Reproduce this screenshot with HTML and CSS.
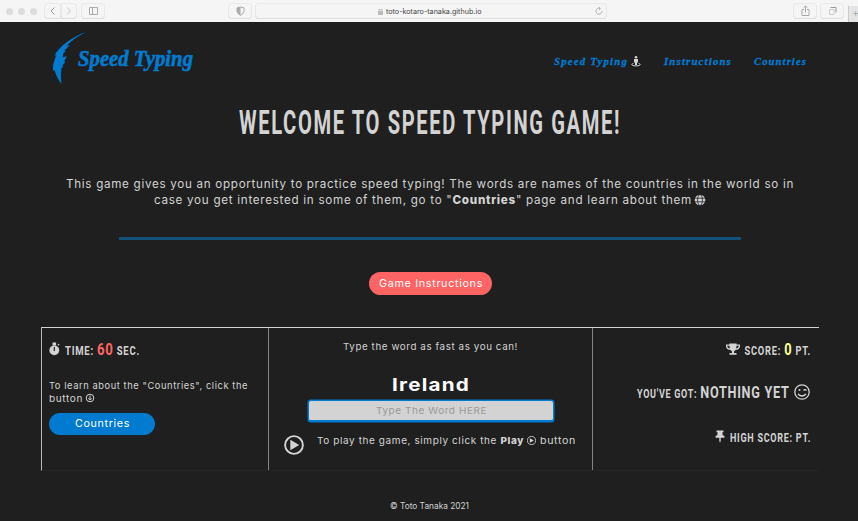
FILE: index.html
```
<!DOCTYPE html>
<html lang="en">
<head>
<meta charset="utf-8">
<title>Speed Typing</title>
<link rel="stylesheet" href="styles.css">
</head>
<body>
<svg class="defs" width="0" height="0" aria-hidden="true">
  <symbol id="play" viewBox="0 0 20 20"><circle cx="10" cy="10" r="8.9" fill="none" stroke="currentColor" stroke-width="1.9"/><path d="M6.3 4.8v10.4l8.9-5.2z" fill="currentColor"/></symbol>
</svg>
<div class="toolbar">
  <div class="dots"><i></i><i></i><i></i></div>
  <div class="tool back"><svg width="16" height="14"><path d="M9.5 3.5L6 7l3.500 3.500" stroke="#999"/></svg></div>
  <div class="tool forward"><svg width="15" height="14"><path d="M6 3.500L9.500 7 6 10.500" stroke="#c8c8c8"/></svg></div>
  <div class="tool sidebar"><svg width="23" height="14"><path d="M7.500 3.500h8v7h-8zM10.500 3.500v7" stroke="#aaa"/></svg></div>
  <div class="tool shield"><svg width="23" height="14"><path d="M11.500 3l3.500.8v3.500q-.4 2.500-3.500 4-3.100-1.500-3.500-4V3.800z" stroke="#aaa"/><path d="M11.500 3v8.300q-3.100-1.500-3.500-4V3.800z" fill="#aaa"/></svg></div>
  <div class="address">
    <svg class="lock" width="5" height="7"><path d="M0 3h5v4H0z" fill="#bbb"/><path d="M1 3V1.500h3V3" stroke="#bbb"/></svg>
    <span>toto-kotaro-tanaka.github.io</span>
    <svg class="reload" width="8" height="8"><path d="M5 1.300A3 3 0 1 0 7 4M3.500 0L5.300 1.400 4 3" stroke="#aaa" stroke-width=".9"/></svg>
  </div>
  <div class="tool share"><svg width="23" height="14"><path d="M10 5.500H8v6h7v-6h-2M11.500 8.500V2M9.700 3.700l1.800-1.800 1.800 1.800" stroke="#aaa"/></svg></div>
  <div class="tool tabs"><svg width="23" height="14"><path d="M8.500 5.500h4.500v5H8.500z" stroke="#ccc"/><path d="M9.500 3.500h5.500v5" stroke="#999"/></svg></div>
  <div class="plus">+</div>
</div>
<header>
  <svg class="logo" width="142" height="54" viewBox="0 0 142 54">
    <path d="M34 1C20 6 6 16 2.500 25l1.800-.9C2 30 0 36 1.500 40l1-1C4 44 6 49 9.500 53 8.500 47 9 42 9.500 37l1.800-1.200-.9-1.200 2.600-3-.7-1.800 2.700-4.500-4.200 1 .5-3.500 2.200-2.500-1-.7 5.500-5.500-3.500.6C19 10 26 5 34 1z" fill="#017bd0"/>
    <text class="logo-text" x="26" y="35" textLength="115" lengthAdjust="spacingAndGlyphs">Speed Typing</text>
  </svg>
  <nav>
    <a><svg width="87" height="18"><text class="nav-text" x="0" y="12" textLength="74" lengthAdjust="spacingAndGlyphs">Speed Typing</text><g fill="#d3d3d3"><circle cx="82" cy="4.300" r="1.300"/><path d="M80 6h4v3.200l-1 .5v2.300h-2V9.700l-1-.5z"/><path d="M79.500 10.300c-2.500.7-2.500 2.600 2.500 2.600s5-1.900 2.500-2.600" fill="none" stroke="#d3d3d3"/></g></svg></a>
    <a><svg width="67" height="18"><text class="nav-text" x="0" y="12" textLength="68" lengthAdjust="spacingAndGlyphs">Instructions</text></svg></a>
    <a><svg width="52" height="18"><text class="nav-text" x="0" y="12" textLength="53" lengthAdjust="spacingAndGlyphs">Countries</text></svg></a>
  </nav>
</header>
<main>
  <h1><svg width="384" height="36"><text class="display" x="2" y="29" font-size="33.500" textLength="382" lengthAdjust="spacingAndGlyphs">WELCOME TO SPEED TYPING GAME!</text></svg></h1>
  <div class="intro">
    <svg width="728" height="16"><text x="0" y="12" textLength="728" lengthAdjust="spacingAndGlyphs">This game gives you an opportunity to practice speed typing! The words are names of the countries in the world so in</text></svg>
    <svg width="552" height="16"><text x="0" y="12" textLength="538" lengthAdjust="spacingAndGlyphs">case you get interested in some of them, go to "<tspan class="strong">Countries</tspan>" page and learn about them</text><circle cx="546" cy="8" r="5.300"/><g fill="none" stroke="#1f1f1f" stroke-width=".8"><path d="M541 6.200h10M541 9.800h10"/><ellipse cx="546" cy="8" rx="2.400" ry="5.500"/></g></svg>
  </div>
  <hr>
  <button class="pill red"><svg width="103" height="16"><text x="0" y="11" textLength="104" lengthAdjust="spacingAndGlyphs">Game Instructions</text></svg></button>
  <section class="panel">
    <div class="cell left">
      <svg class="stat" width="90" height="20"><g fill="#d3d3d3"><circle cx="5.300" cy="10.300" r="4.900"/><path d="M3.500 2.500h3.600v3H3.500zM8.500 4.700l1-1 1 1-1 1z"/></g><path d="M5.300 7v4" stroke="#1f1f1f" stroke-width="1.200"/><text class="display" x="16" y="14.500" font-size="12.300" textLength="75" lengthAdjust="spacingAndGlyphs">TIME: <tspan class="coral">60</tspan> SEC.</text></svg>
      <div class="learn"><svg width="200" height="25"><text x="0" y="9" textLength="199" lengthAdjust="spacingAndGlyphs">To learn about the "Countries", click the</text><text x="0" y="22" textLength="34" lengthAdjust="spacingAndGlyphs">button</text><g fill="none" stroke="#d3d3d3"><circle cx="41" cy="18" r="3.800"/><path d="M41 15.500v4M39.200 18.300l1.800 1.800 1.800-1.800"/></g></svg></div>
      <button class="pill blue"><svg width="54" height="16"><text x="0" y="11" textLength="55" lengthAdjust="spacingAndGlyphs">Countries</text></svg></button>
    </div>
    <div class="cell center">
      <svg class="hint" width="175" height="16"><text x="0" y="11" textLength="175" lengthAdjust="spacingAndGlyphs">Type the word as fast as you can!</text></svg>
      <svg class="word" width="77" height="22"><text x="0" y="17.500" textLength="78" lengthAdjust="spacingAndGlyphs">Ireland</text></svg>
      <div class="entry"><svg width="110" height="16"><text x="0" y="11" textLength="111" lengthAdjust="spacingAndGlyphs">Type The Word HERE</text></svg></div>
      <div class="play-row"><svg class="play" width="20" height="20"><use href="#play"/></svg><svg width="259" height="16"><text x="0" y="11" textLength="207" lengthAdjust="spacingAndGlyphs">To play the game, simply click the <tspan class="strong">Play</tspan></text><use href="#play" x="210" y="3" width="9" height="9"/><text x="223" y="11" textLength="36" lengthAdjust="spacingAndGlyphs">button</text></svg></div>
    </div>
    <div class="cell right">
      <svg width="84" height="20"><path d="M3.500 3.500h7v1H14v2c0 2-2 3.300-4.500 3.500L8 11.500v1.500h2.500v1.700h-7V13H6v-1.500L4.500 10C2 9.800 0 8.500 0 6.500v-2h3.500zM1.200 5.700c0 1.400 1.200 2.500 2.600 2.800L3.400 5.700zm11.600 0h-2.200l-.4 2.800c1.400-.3 2.600-1.400 2.600-2.800z" fill="#d3d3d3"/><text class="display" x="18.500" y="14.500" font-size="12.300" textLength="66.500" lengthAdjust="spacingAndGlyphs">SCORE: <tspan class="yellow">0</tspan> PT.</text></svg>
      <svg width="173" height="20"><text class="display" x="0" y="16" font-size="12.300" textLength="152.500" lengthAdjust="spacingAndGlyphs">YOU'VE GOT: <tspan font-size="17.300">NOTHING YET</tspan></text><g fill="none" stroke="#d3d3d3" stroke-width="1.300"><circle cx="165" cy="10" r="7.200"/><path d="M161 12q4 4 8 0M166.500 8.500q1.500-1.700 3 0"/></g><circle cx="162.500" cy="8" r="1" fill="#d3d3d3"/></svg>
      <svg width="95" height="20"><path d="M1.500 2.500h7v1.700H7.300l.4 2.800 1.800 1.300v1.500H5.700v3.500L5 14.500l-.7-1.200V9.800H.5V8.300L2.300 7l.4-2.800H1.500z" fill="#d3d3d3"/><text class="display" x="15" y="13.500" font-size="12.300" textLength="81" lengthAdjust="spacingAndGlyphs">HIGH SCORE: PT.</text></svg>
    </div>
  </section>
</main>
<footer><svg width="80" height="14"><text class="copyright" x="0" y="10" textLength="79" lengthAdjust="spacingAndGlyphs">© Toto Tanaka 2021</text></svg></footer>
</body>
</html>
```
FILE: styles.css
```
* { box-sizing: border-box; }
body { margin: 0; width: 858px; height: 521px; overflow: hidden; background: #1f1f1f; color: #d3d3d3; font: 11.500px Inter, sans-serif; }
svg { display: block; overflow: visible; flex: none; }
svg text { fill: #d3d3d3; letter-spacing: .06em; }
.defs { position: absolute; }
.strong { font-weight: 800; }
svg .display { font-family: "Liberation Sans Narrow", Roboto, sans-serif; font-weight: 700; letter-spacing: .08em; }
svg .coral { fill: #ff6464; font-size: 17px; }
svg .yellow { fill: #ffff8f; font-size: 17px; }
svg .copyright { letter-spacing: 0; }

.toolbar { height: 22px; display: flex; align-items: center; padding-left: 6px; background: #f5f5f5; overflow: hidden; }
.toolbar svg { fill: none; }
.dots { display: flex; flex: none; gap: 5px; width: 38px; }
.dots i { width: 7px; height: 7px; border-radius: 50%; background: #dcdcdc; }
.tool { height: 14px; border-radius: 2px; box-shadow: 0 0 0 .6px #e0e0e0, 0 1px 0 #dedede; display: flex; flex: none; justify-content: center; }
.back { width: 16px; margin-left: 1px; }
.forward { width: 15px; }
.sidebar { width: 22px; margin-left: 6px; }
.shield { width: 22px; margin-left: 125px; }
.share { width: 22px; margin-left: 188px; }
.tabs { width: 22px; margin-left: 5px; }
.address { width: 350px; flex: none; height: 14px; margin-left: 5px; border-radius: 2px; box-shadow: 0 0 0 .6px #e0e0e0, 0 1px 0 #dedede; display: flex; align-items: center; color: #454545; font: 7.200px Inter, sans-serif; }
.lock { margin: 0 3px 0 122px; }
.reload { margin-left: auto; margin-right: 3px; }
.plus { width: 12px; flex: none; height: 16px; margin-left: 5px; align-self: flex-end; background: #e4e4e4; border-left: 1px solid #ccc; color: #aaa; font-size: 11px; line-height: 14px; padding-left: 3px; }

header { height: 74px; padding: 9px 52px 0; display: flex; justify-content: space-between; }
nav { display: flex; gap: 23px; padding-top: 22px; }
.logo .logo-text { fill: #017bd0; font: italic bold 23px "Liberation Serif", serif; letter-spacing: 0; stroke: #017bd0; stroke-width: .6px; }
nav .nav-text { fill: #017bd0; font: italic bold 11px "Liberation Serif", serif; letter-spacing: 1.200px; stroke: #017bd0; stroke-width: .3px; }

main { display: flex; flex-direction: column; align-items: center; }
h1 { margin: 9px 0 0; }
.intro { margin: 35px 0 0 2px; display: flex; flex-direction: column; align-items: center; fill: #d3d3d3; }
hr { width: 622px; height: 3px; margin: 29px 0 0 2px; border: 0; background: #115078; }
.pill { height: 23px; padding: 0; border: 0; border-radius: 12px; display: flex; align-items: center; justify-content: center; font: 10.700px Inter, sans-serif; }
.pill text { fill: #fff; }
.red { width: 123px; margin-top: 32px; margin-left: 2px; background: #ff6464; }
.blue { width: 106px; height: 22px; margin-top: 8px; background: #017bd0; }
.panel { width: 778px; height: 144px; margin: 32px 0 0 2px; display: grid; grid-template-columns: 227px 324px 226px; border-top: 1px solid #d3d3d3; border-left: 1px solid #b8b8b8; border-bottom: 1px solid #252525; }
.cell { border-right: 1px solid #858585; }
.left { padding: 12px 0 0 7px; font-size: 9.500px; }
.learn { margin-top: 20px; }
.center { display: flex; flex-direction: column; align-items: center; font-size: 9.500px; }
.hint { margin-top: 11px; }
.word { margin-top: 18px; font-size: 18px; font-weight: 700; }
.word text { fill: #fff; }
.entry { width: 246px; height: 22px; margin: 5px 0 0 1px; border: 1px solid #017bd0; border-bottom-width: 2px; box-shadow: 0 0 0 .5px #017bd0; border-radius: 3px; background: #d3d3d3; display: flex; align-items: center; justify-content: center; }
.entry text { fill: #999; }
.play-row { display: flex; gap: 13px; margin: 11px 1px 0 0; }
.play { margin-top: 2px; }
.right { border: 0; padding: 12px 9px 0 0; display: flex; flex-direction: column; align-items: flex-end; gap: 22px; }
.right svg:last-child { margin-top: 4px; }
footer { display: flex; justify-content: center; padding: 28px 0 0 2px; font-size: 8.700px; }
```
